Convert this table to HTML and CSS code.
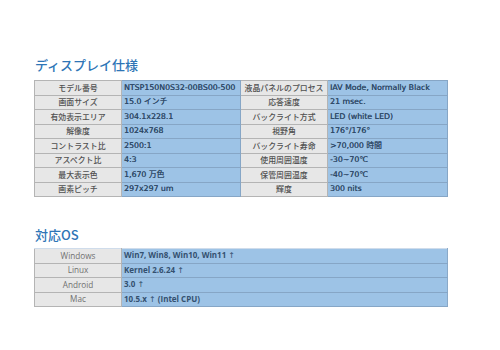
FILE: index.html
```html
<!DOCTYPE html>
<html lang="ja">
<head>
<meta charset="utf-8">
<link rel="stylesheet" href="styles.css">
</head>
<body>
<div class="page">
  <h2 class="title t1">ディスプレイ仕様</h2>
  <table class="spec">
    <colgroup><col class="c1"><col class="c2"><col class="c3"><col class="c4"></colgroup>
    <tr><th>モデル番号</th><td>NTSP150N0S32-00BS00-500</td><th>液晶パネルのプロセス</th><td>IAV Mode, Normally Black</td></tr>
    <tr><th>画面サイズ</th><td>15.0 インチ</td><th>応答速度</th><td>21 msec.</td></tr>
    <tr><th>有効表示エリア</th><td>304.1x228.1</td><th>バックライト方式</th><td>LED (white LED)</td></tr>
    <tr><th>解像度</th><td>1024x768</td><th>視野角</th><td>176°/176°</td></tr>
    <tr><th>コントラスト比</th><td>2500:1</td><th>バックライト寿命</th><td>&gt;70,000 時間</td></tr>
    <tr><th>アスペクト比</th><td>4:3</td><th>使用周囲温度</th><td>-30~70℃</td></tr>
    <tr><th>最大表示色</th><td>1,670 万色</td><th>保管周囲温度</th><td>-40~70℃</td></tr>
    <tr><th>画素ピッチ</th><td>297x297 um</td><th>輝度</th><td>300 nits</td></tr>
  </table>
  <h2 class="title t2">対応OS</h2>
  <table class="os">
    <colgroup><col class="o1"><col class="o2"></colgroup>
    <tr><th>Windows</th><td>Win7, Win8, Win10, Win11 <span class="up">↑</span></td></tr>
    <tr><th>Linux</th><td>Kernel 2.6.24 <span class="up">↑</span></td></tr>
    <tr><th>Android</th><td>3.0 <span class="up">↑</span></td></tr>
    <tr><th>Mac</th><td>10.5.x <span class="up">↑</span> (Intel CPU)</td></tr>
  </table>
</div>
</body>
</html>
```

FILE: styles.css
```css
html, body {
  margin: 0;
  padding: 0;
  background: #ffffff;
}
.page {
  width: 500px;
  height: 350px;
  padding: 0 0 0 34px;
  box-sizing: border-box;
  overflow: hidden;
}
.title {
  margin: 0;
  font-family: "Noto Sans CJK JP", "Noto Sans", sans-serif;
  font-weight: 500;
  font-size: 13px;
  line-height: 16px;
  color: #2e75b6;
  padding-left: 1px;
}
.t1 { padding-top: 57px; margin-bottom: 7px; }
.t2 { padding-top: 30px; margin-bottom: 5px; }
table {
  border-collapse: collapse;
  table-layout: fixed;
  width: 413px;
}
tr { height: 14.5px; }
th, td {
  padding: 0 2px;
  white-space: nowrap;
  overflow: hidden;
  line-height: 12px;
}
th {
  background: #e7e7e7;
  border: 1px solid #b4b4b4;
  text-align: center;
  font-weight: normal;
}
td {
  background: #9dc3e6;
  border: 1px solid #86a6c6;
  text-align: left;
  color: #2f4a68;
}
.spec th {
  font-family: "Noto Sans CJK JP", sans-serif;
  font-size: 7.9px;
  font-weight: 500;
  color: #505050;
}
.spec td {
  font-family: "DejaVu Sans", "Noto Sans CJK JP", sans-serif;
  font-size: 7.8px;
  text-shadow: 0.2px 0 0 #2f4a68;
}
.c1 { width: 87px; }
.c2 { width: 119px; }
.c3 { width: 87px; }
.c4 { width: 120px; }
.o1 { width: 87px; }
.o2 { width: 326px; }
.os th {
  font-family: "Open Sans", "Noto Sans", sans-serif;
  font-size: 8.2px;
  color: #707070;
}
.os td {
  font-family: "Open Sans", "Noto Sans", sans-serif;
  font-weight: 700;
  font-size: 8px;
  color: #34506f;
}
.up {
  font-family: "DejaVu Sans", sans-serif;
  font-weight: normal;
  font-size: 8px;
}
.os tr:first-child td, .os tr:first-child th { border-top-color: #cfdceb; }
.os td { border-right-color: #8aa9c8; }
```
